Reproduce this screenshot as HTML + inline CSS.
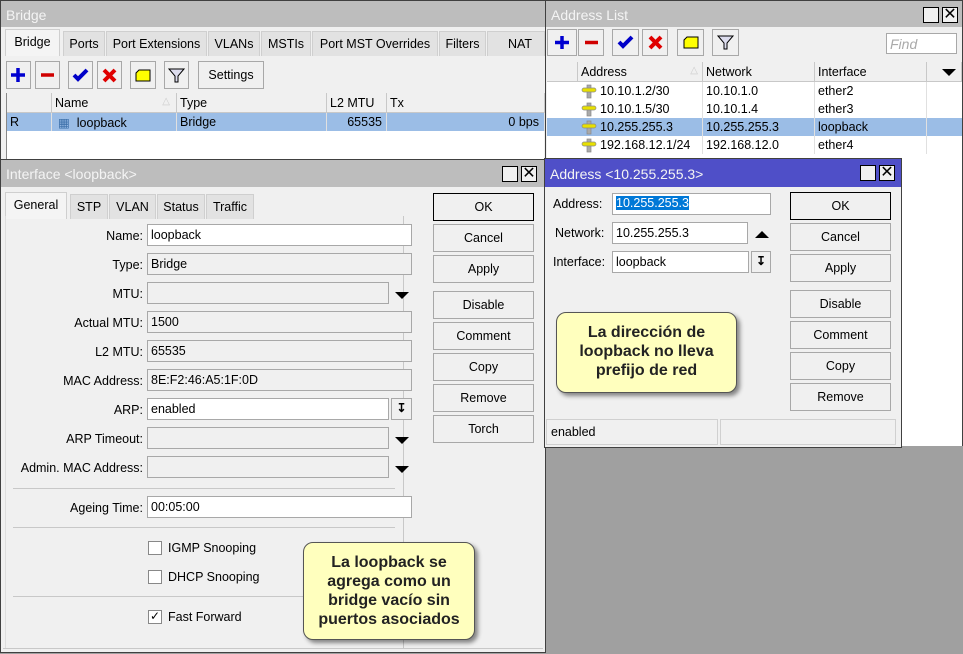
<!DOCTYPE html>
<html><head><meta charset="utf-8">
<style>
*{box-sizing:border-box;margin:0;padding:0}
body{width:963px;height:652px;background:#a0a0a0;position:relative;overflow:hidden;font-family:"Liberation Sans",sans-serif;font-size:12.5px;color:#000}
.a{position:absolute}
.win{position:absolute;background:#f0f0f0;border:1px solid #404040}
.title{position:absolute;left:0;right:0;top:0;height:26px;background:#bdbdbd;color:#f4f4f4;font-size:14px;padding:6px 0 0 5px}
.tb{position:absolute;width:16px;height:16px;border:1px solid #000;background:#f0f0f0}
.tab{position:absolute;height:25px;border:1px solid #cfcfcf;border-bottom:none;background:#e2e2e2;padding:5px 0 0 0;text-align:center}
.tab.on{background:#f4f4f4;height:27px;top:-2px}
.btn{position:absolute;border:1px solid #a8a8a8;background:#f0f0f0;text-align:center}
.inp{position:absolute;height:22px;border:1px solid #a8a8a8;background:#fff;padding:3px 0 0 3px}
.ro{background:#f0f0f0}
.lbl{position:absolute;text-align:right;width:140px}
.hdr{position:absolute;height:20px;background:#f0f0f0;border-right:1px solid #c8c8c8;border-bottom:1px solid #c8c8c8;padding:3px 0 0 3px}
.cell{position:absolute;height:18px;padding:2px 0 0 3px;border-right:1px solid #e0e0e0}
.note{position:absolute;background:#ffffbe;border:1px solid #555;border-radius:10px;box-shadow:3px 3px 4px rgba(0,0,0,.45);font-weight:bold;font-size:16px;text-align:center;color:#222;line-height:19px}
.dd{position:absolute;width:0;height:0;border-left:7px solid transparent;border-right:7px solid transparent;border-top:7px solid #000}
.sep{position:absolute;height:1px;background:#c8c8c8}
.cb{position:absolute;width:14px;height:14px;border:1px solid #888;background:#fff}
</style></head><body>

<div class="win" style="left:0;top:0;width:546px;height:162px">
 <div class="title">Bridge</div>
 <div class="a" style="left:4px;top:30px;width:540px;height:26px">
  <div class="tab on" style="left:0;width:55px">Bridge</div>
  <div class="tab" style="left:58px;width:42px">Ports</div>
  <div class="tab" style="left:101px;width:101px">Port Extensions</div>
  <div class="tab" style="left:203px;width:52px">VLANs</div>
  <div class="tab" style="left:256px;width:50px">MSTIs</div>
  <div class="tab" style="left:307px;width:126px">Port MST Overrides</div>
  <div class="tab" style="left:434px;width:47px">Filters</div>
  <div class="tab" style="left:482px;width:58px;text-align:left;padding-left:20px">NAT</div>
 </div>
 <div class="btn" style="left:5px;top:60px;width:25px;height:28px"><svg width="23" height="26"><path d="M11 6v14M4 13h14" stroke="#0000d0" stroke-width="3.5"/></svg></div>
 <div class="btn" style="left:34px;top:60px;width:25px;height:28px"><svg width="23" height="26"><path d="M5 13h13" stroke="#d00000" stroke-width="3.5"/></svg></div>
 <div class="btn" style="left:67px;top:60px;width:25px;height:28px"><svg width="23" height="26"><path d="M5 13l4 4 9-9" stroke="#0000c8" stroke-width="4" fill="none"/></svg></div>
 <div class="btn" style="left:96px;top:60px;width:25px;height:28px"><svg width="23" height="26"><path d="M6 8l11 11M17 8L6 19" stroke="#e00000" stroke-width="4"/></svg></div>
 <div class="btn" style="left:129px;top:60px;width:26px;height:28px"><svg width="24" height="26"><path d="M8 8h11v11H5v-8z" fill="#ffff00" stroke="#000"/></svg></div>
 <div class="btn" style="left:163px;top:60px;width:25px;height:28px"><svg width="23" height="26"><path d="M4 7h15l-6 7v6h-3v-6z" fill="#dde" stroke="#000"/></svg></div>
 <div class="btn" style="left:197px;top:60px;width:66px;height:28px;padding-top:6px">Settings</div>
 <div class="a" style="left:5px;top:92px;width:538px;height:70px;background:#fff;border-left:1px solid #888">
  <div class="hdr" style="left:0;width:45px"></div>
  <div class="hdr" style="left:45px;width:125px">Name<span style="position:absolute;right:6px;color:#ccc;font-size:10px">△</span></div>
  <div class="hdr" style="left:170px;width:150px">Type</div>
  <div class="hdr" style="left:320px;width:60px">L2 MTU</div>
  <div class="hdr" style="left:380px;width:158px">Tx</div>
  <div class="a" style="left:0;top:20px;width:538px;height:18px;background:#9bbde6"></div>
  <div class="cell" style="left:0;top:20px;width:45px">R</div>
  <div class="cell" style="left:45px;top:20px;width:125px;padding-left:6px"><span style="color:#3a6ea8">&#9638;</span> &nbsp;loopback</div>
  <div class="cell" style="left:170px;top:20px;width:150px">Bridge</div>
  <div class="cell" style="left:320px;top:20px;width:60px;text-align:right;padding-right:4px">65535</div>
  <div class="cell" style="left:380px;top:20px;width:158px;text-align:right;padding-right:5px">0 bps</div>
 </div>
</div>

<div class="win" style="left:545px;top:0;width:418px;height:446px">
 <div class="title">Address List</div>
 <div class="tb" style="left:377px;top:6px"></div>
 <div class="tb" style="left:396px;top:6px;font-size:16px;line-height:13px;text-align:center;color:#000">✕</div>
 <div class="btn" style="left:1px;top:28px;width:30px;height:27px"><svg width="28" height="25"><path d="M14 6v13M7 12.5h14" stroke="#0000d0" stroke-width="3.5"/></svg></div>
 <div class="btn" style="left:32px;top:28px;width:26px;height:27px"><svg width="24" height="25"><path d="M6 12.5h13" stroke="#d00000" stroke-width="3.5"/></svg></div>
 <div class="btn" style="left:66px;top:28px;width:27px;height:27px"><svg width="25" height="25"><path d="M6 12l4 4 9-9" stroke="#0000c8" stroke-width="4" fill="none"/></svg></div>
 <div class="btn" style="left:96px;top:28px;width:26px;height:27px"><svg width="24" height="25"><path d="M7 7l11 11M18 7L7 18" stroke="#e00000" stroke-width="4"/></svg></div>
 <div class="btn" style="left:131px;top:28px;width:27px;height:27px"><svg width="25" height="25"><path d="M9 7h11v11H6v-8z" fill="#ffff00" stroke="#000"/></svg></div>
 <div class="btn" style="left:166px;top:28px;width:27px;height:27px"><svg width="25" height="25"><path d="M5 6h15l-6 7v6h-3v-6z" fill="#dde" stroke="#000"/></svg></div>
 <div class="inp" style="left:340px;top:32px;width:71px;height:21px;color:#aaa;font-style:italic;font-size:14px;padding-top:2px">Find</div>
 <div class="a" style="left:1px;top:61px;width:415px;height:384px;background:#fff">
  <div class="hdr" style="left:0;width:31px"></div>
  <div class="hdr" style="left:31px;width:125px">Address<span style="position:absolute;right:4px;color:#ccc;font-size:10px">△</span></div>
  <div class="hdr" style="left:156px;width:112px">Network</div>
  <div class="hdr" style="left:268px;width:112px">Interface</div>
  <div class="hdr" style="left:380px;width:35px"><div class="dd" style="left:15px;top:7px"></div></div>
  <div class="a" style="left:0;top:56px;width:415px;height:18px;background:#9bbde6"></div>
  <div class="cell" style="left:31px;top:20px;width:125px;padding-left:22px">10.10.1.2/30</div>
  <div class="cell" style="left:156px;top:20px;width:112px">10.10.1.0</div>
  <div class="cell" style="left:268px;top:20px;width:112px">ether2</div>
  <div class="cell" style="left:31px;top:38px;width:125px;padding-left:22px">10.10.1.5/30</div>
  <div class="cell" style="left:156px;top:38px;width:112px">10.10.1.4</div>
  <div class="cell" style="left:268px;top:38px;width:112px">ether3</div>
  <div class="cell" style="left:31px;top:56px;width:125px;padding-left:22px">10.255.255.3</div>
  <div class="cell" style="left:156px;top:56px;width:112px">10.255.255.3</div>
  <div class="cell" style="left:268px;top:56px;width:112px">loopback</div>
  <div class="cell" style="left:31px;top:74px;width:125px;padding-left:22px">192.168.12.1/24</div>
  <div class="cell" style="left:156px;top:74px;width:112px">192.168.12.0</div>
  <div class="cell" style="left:268px;top:74px;width:112px">ether4</div>
  <svg class="a" style="left:34px;top:20px" width="18" height="74"><g fill="#e8e000" stroke="#888" stroke-width=".7"><rect x="6" y="3" width="4" height="13" fill="#aaa"/><rect x="1" y="6" width="14" height="4" rx="2"/><rect x="6" y="21" width="4" height="13" fill="#aaa"/><rect x="1" y="24" width="14" height="4" rx="2"/><rect x="6" y="39" width="4" height="13" fill="#aaa"/><rect x="1" y="42" width="14" height="4" rx="2"/><rect x="6" y="57" width="4" height="13" fill="#aaa"/><rect x="1" y="60" width="14" height="4" rx="2"/></g></svg>
 </div>
</div>

<div class="win" style="left:0;top:159px;width:546px;height:494px">
 <div class="title" style="height:27px">Interface &lt;loopback&gt;</div>
 <div class="tb" style="left:501px;top:6px"></div>
 <div class="tb" style="left:520px;top:6px;font-size:16px;line-height:13px;text-align:center">✕</div>
 <div class="a" style="left:4px;top:34px;width:400px;height:26px">
  <div class="tab on" style="left:0;width:62px">General</div>
  <div class="tab" style="left:65px;width:38px">STP</div>
  <div class="tab" style="left:104px;width:47px">VLAN</div>
  <div class="tab" style="left:152px;width:48px">Status</div>
  <div class="tab" style="left:201px;width:48px">Traffic</div>
 </div>
 <div class="a" style="left:4px;top:56px;width:399px;height:432px;border-right:1px solid #c8c8c8;border-left:1px solid #ddd"></div>
 <div class="lbl" style="left:2px;top:69px">Name:</div><div class="inp" style="left:146px;top:64px;width:265px">loopback</div>
 <div class="lbl" style="left:2px;top:98px">Type:</div><div class="inp ro" style="left:146px;top:93px;width:265px">Bridge</div>
 <div class="lbl" style="left:2px;top:127px">MTU:</div><div class="inp ro" style="left:146px;top:122px;width:242px"></div><div class="dd" style="left:394px;top:132px"></div>
 <div class="lbl" style="left:2px;top:156px">Actual MTU:</div><div class="inp ro" style="left:146px;top:151px;width:265px">1500</div>
 <div class="lbl" style="left:2px;top:185px">L2 MTU:</div><div class="inp ro" style="left:146px;top:180px;width:265px">65535</div>
 <div class="lbl" style="left:2px;top:214px">MAC Address:</div><div class="inp ro" style="left:146px;top:209px;width:265px">8E:F2:46:A5:1F:0D</div>
 <div class="lbl" style="left:2px;top:243px">ARP:</div><div class="inp" style="left:146px;top:238px;width:242px">enabled</div>
 <div class="inp ro" style="left:390px;top:238px;width:21px;text-align:center;padding:2px 0 0 0;font-size:12px;font-weight:bold">&#8615;</div>
 <div class="lbl" style="left:2px;top:272px">ARP Timeout:</div><div class="inp ro" style="left:146px;top:267px;width:242px"></div><div class="dd" style="left:394px;top:277px"></div>
 <div class="lbl" style="left:2px;top:301px">Admin. MAC Address:</div><div class="inp ro" style="left:146px;top:296px;width:242px"></div><div class="dd" style="left:394px;top:306px"></div>
 <div class="sep" style="left:12px;top:328px;width:382px"></div>
 <div class="lbl" style="left:2px;top:341px">Ageing Time:</div><div class="inp" style="left:146px;top:336px;width:265px">00:05:00</div>
 <div class="sep" style="left:12px;top:367px;width:382px"></div>
 <div class="cb" style="left:147px;top:381px"></div><div class="a" style="left:167px;top:381px">IGMP Snooping</div>
 <div class="cb" style="left:147px;top:410px"></div><div class="a" style="left:167px;top:410px">DHCP Snooping</div>
 <div class="sep" style="left:12px;top:436px;width:382px"></div>
 <div class="cb" style="left:147px;top:450px;font-size:12px;line-height:11px;text-align:center">✓</div><div class="a" style="left:167px;top:450px">Fast Forward</div>
 <div class="a" style="left:2px;top:488px;width:540px;height:6px;border-top:1px solid #c8c8c8"></div>
 <div class="btn" style="left:432px;top:33px;width:101px;height:28px;border-color:#000;padding-top:6px">OK</div>
 <div class="btn" style="left:432px;top:64px;width:101px;height:28px;padding-top:6px">Cancel</div>
 <div class="btn" style="left:432px;top:95px;width:101px;height:28px;padding-top:6px">Apply</div>
 <div class="btn" style="left:432px;top:131px;width:101px;height:28px;padding-top:6px">Disable</div>
 <div class="btn" style="left:432px;top:162px;width:101px;height:28px;padding-top:6px">Comment</div>
 <div class="btn" style="left:432px;top:193px;width:101px;height:28px;padding-top:6px">Copy</div>
 <div class="btn" style="left:432px;top:224px;width:101px;height:28px;padding-top:6px">Remove</div>
 <div class="btn" style="left:432px;top:255px;width:101px;height:28px;padding-top:6px">Torch</div>
</div>

<div class="win" style="left:544px;top:158px;width:358px;height:290px">
 <div class="title" style="background:#4f4fc8;height:28px;padding-top:7px">Address &lt;10.255.255.3&gt;</div>
 <div class="tb" style="left:315px;top:6px;border-color:#000"></div>
 <div class="tb" style="left:334px;top:6px;font-size:16px;line-height:13px;text-align:center">✕</div>
 <div class="a" style="left:8px;top:38px">Address:</div>
 <div class="inp" style="left:67px;top:34px;width:159px;padding-top:2px"><span style="background:#0078d7;color:#fff">10.255.255.3</span></div>
 <div class="a" style="left:10px;top:67px">Network:</div>
 <div class="inp" style="left:67px;top:63px;width:136px">10.255.255.3</div>
 <div class="a" style="left:210px;top:72px;width:0;height:0;border-left:7px solid transparent;border-right:7px solid transparent;border-bottom:7px solid #000"></div>
 <div class="a" style="left:8px;top:96px">Interface:</div>
 <div class="inp" style="left:67px;top:92px;width:137px">loopback</div>
 <div class="inp ro" style="left:206px;top:92px;width:20px;text-align:center;padding:2px 0 0 0;font-size:12px;font-weight:bold">&#8615;</div>
 <div class="btn" style="left:245px;top:33px;width:101px;height:28px;border-color:#000;padding-top:6px">OK</div>
 <div class="btn" style="left:245px;top:64px;width:101px;height:28px;padding-top:6px">Cancel</div>
 <div class="btn" style="left:245px;top:95px;width:101px;height:28px;padding-top:6px">Apply</div>
 <div class="btn" style="left:245px;top:131px;width:101px;height:28px;padding-top:6px">Disable</div>
 <div class="btn" style="left:245px;top:162px;width:101px;height:28px;padding-top:6px">Comment</div>
 <div class="btn" style="left:245px;top:193px;width:101px;height:28px;padding-top:6px">Copy</div>
 <div class="btn" style="left:245px;top:224px;width:101px;height:28px;padding-top:6px">Remove</div>
 <div class="a" style="left:1px;top:260px;width:172px;height:26px;border:1px solid #d0d0d0;padding:5px 0 0 4px">enabled</div>
 <div class="a" style="left:175px;top:260px;width:176px;height:26px;border:1px solid #d0d0d0"></div>
</div>

<div class="note" style="left:556px;top:312px;width:181px;height:81px;padding-top:10px">La dirección de<br>loopback no lleva<br>prefijo de red</div>
<div class="note" style="left:303px;top:542px;width:172px;height:98px;padding-top:10px">La loopback se<br>agrega como un<br>bridge vacío sin<br>puertos asociados</div>
</body></html>
